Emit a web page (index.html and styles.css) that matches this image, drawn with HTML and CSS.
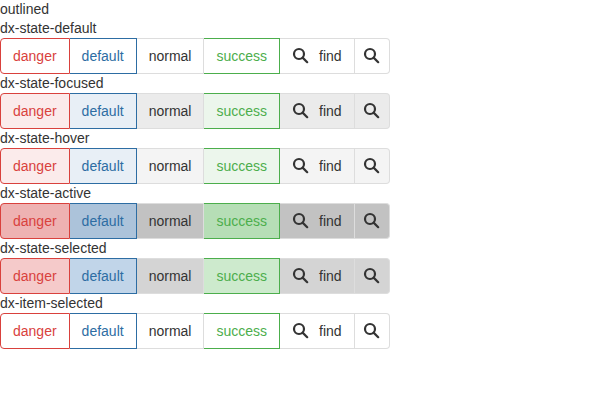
FILE: index.html
```html
<!DOCTYPE html>
<html lang="en">
<head>
<meta charset="utf-8">
<title>Button group</title>
<link rel="stylesheet" href="styles.css">
</head>
<body>
<svg width="0" height="0" class="defs">
  <symbol id="find" viewBox="0 0 18 18">
    <circle cx="7" cy="7" r="5" fill="none" stroke="currentColor" stroke-width="2.2"/>
    <path d="M10.6 10.6L15.2 15.2" fill="none" stroke="currentColor" stroke-width="2.2" stroke-linecap="round"/>
  </symbol>
</svg>
<div class="label">outlined</div>
<div id="groups"></div>
<script src="script.js"></script>
</body>
</html>
```
FILE: styles.css
```css
body {
  margin: 0;
  background: #fff;
  color: #333;
  font: 14px/19px "Liberation Sans", Arial, sans-serif;
}
.defs { position: absolute; }
.label { height: 19px; }
.group { display: flex; height: 36px; }
.button {
  box-sizing: border-box;
  display: flex;
  align-items: center;
  padding: 0 12px;
  border: 1px solid #ddd;
  border-left-width: 0;
}
.danger {
  color: #d9413d;
  border-color: #d9413d;
  border-left-width: 1px;
  border-radius: 4px 0 0 4px;
}
.default { color: #2d6da3; border-color: #2d6da3; }
.success { color: #4cae4c; border-color: #4cae4c; }
.icon-only { padding: 0 8px; border-radius: 0 4px 4px 0; }
.icon { width: 18px; height: 18px; }
.icon + span { margin-left: 9px; }

.focused .normal { background: #ebebeb; }
.hover .normal { background: #f4f4f4; }
.focused .danger, .hover .danger { background: #fbebeb; }
.focused .default, .hover .default { background: #e8eff6; }
.focused .success, .hover .success { background: #ecf6ec; }

.active .danger { background: #eeb2b2; }
.active .default { background: #acc3da; }
.active .normal { background: #c2c2c2; }
.active .success { background: #b6deb6; }

.selected .danger { background: #f5caca; }
.selected .default { background: #c1d5e9; }
.selected .normal { background: #d4d4d4; }
.selected .success { background: #cdeacd; }
```
FILE: script.js
```js
const states = [
  ["dx-state-default", "plain"],
  ["dx-state-focused", "focused"],
  ["dx-state-hover", "hover"],
  ["dx-state-active", "active"],
  ["dx-state-selected", "selected"],
  ["dx-item-selected", "plain"]
];
const icon = '<svg class="icon"><use href="#find"/></svg>';
document.getElementById("groups").innerHTML = states.map(([label, state]) => `
  <div class="label">${label}</div>
  <div class="group ${state}">
    <div class="button danger">danger</div>
    <div class="button default">default</div>
    <div class="button normal">normal</div>
    <div class="button success">success</div>
    <div class="button normal">${icon}<span>find</span></div>
    <div class="button normal icon-only">${icon}</div>
  </div>`).join("");
```
